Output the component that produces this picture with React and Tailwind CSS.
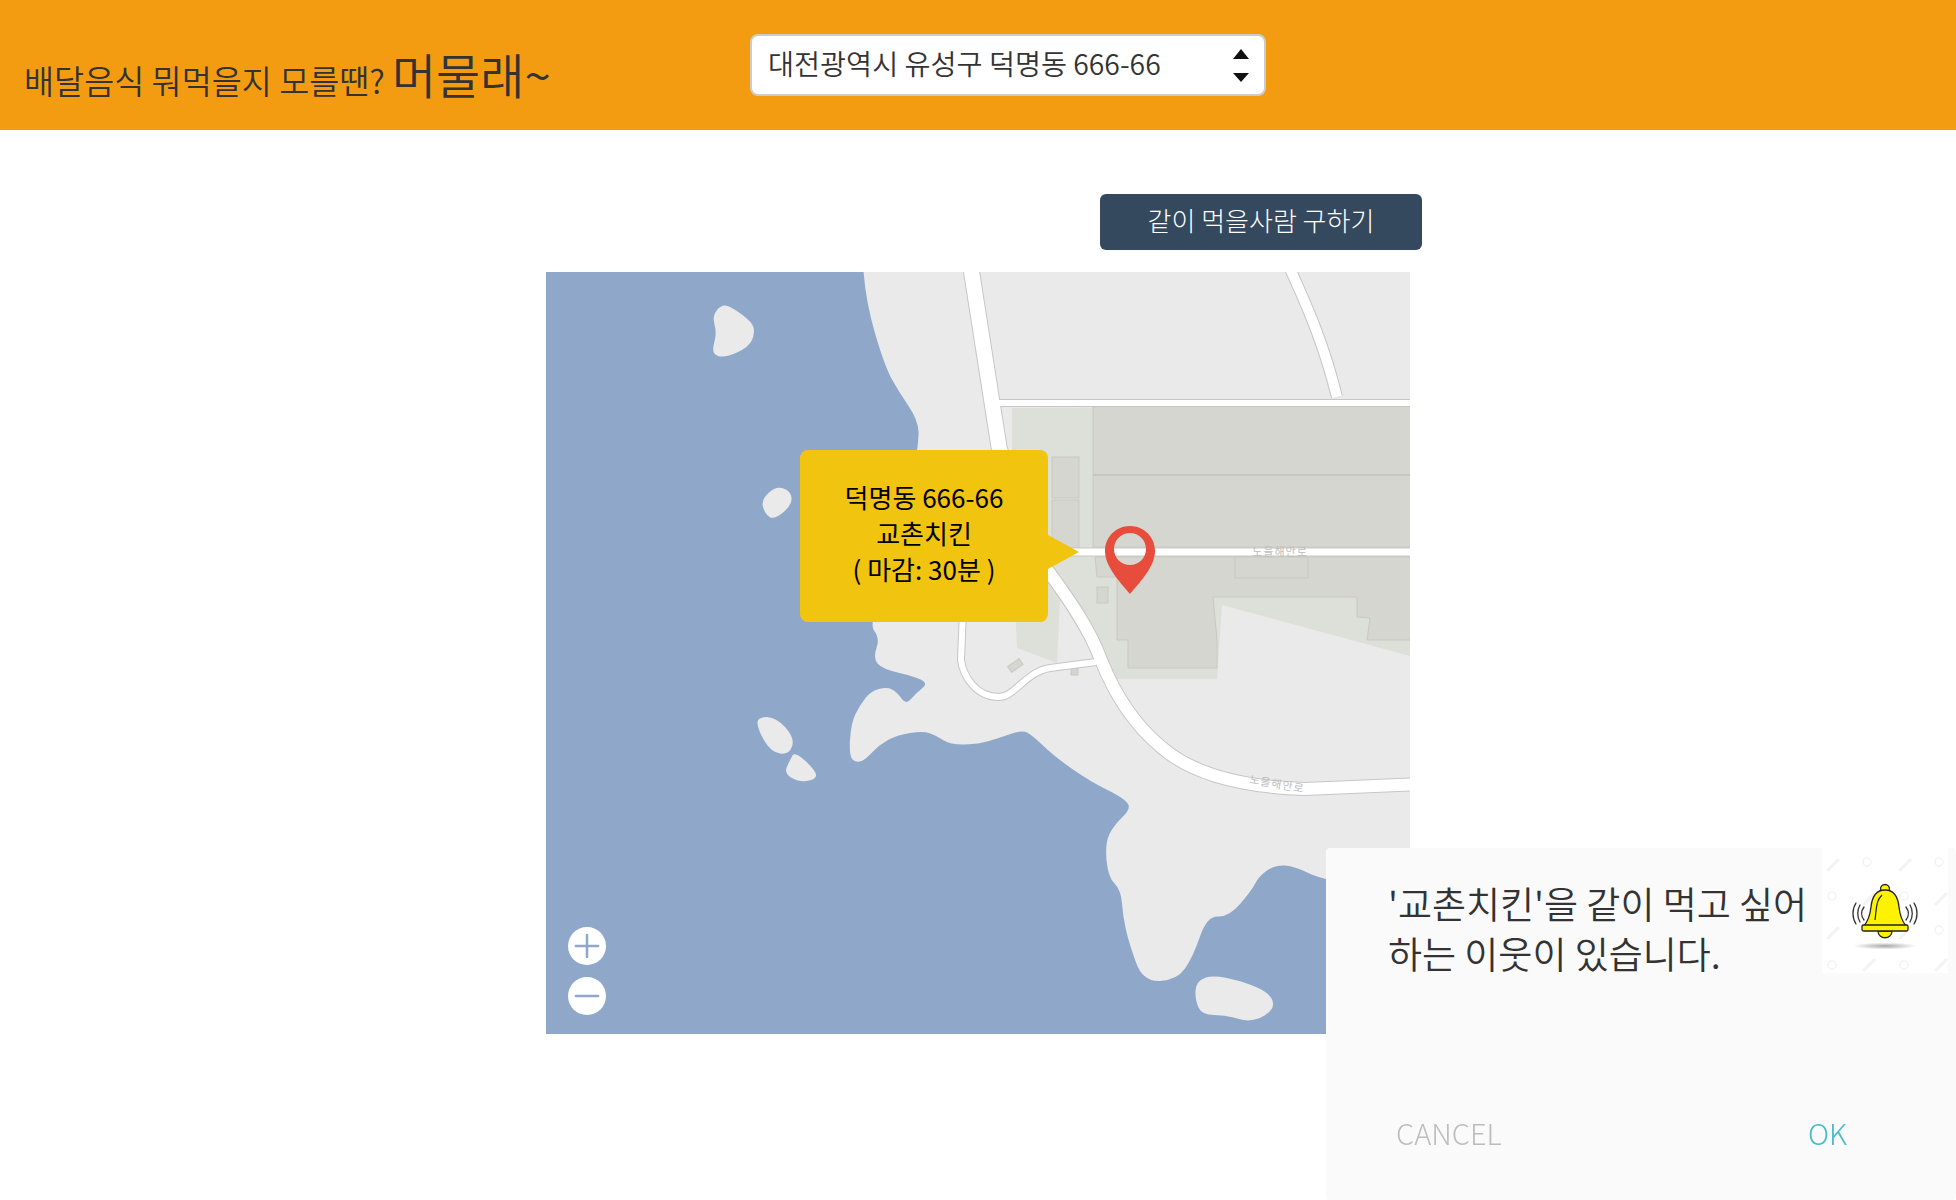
import React from 'react';
import { Plus, Minus } from 'lucide-react';

const FONT = "font-['Noto_Sans_CJK_KR','Noto_Sans',sans-serif]";

// Outlines traced off the map, in page coordinates (viewBox matches them)
const COAST = [
  [861, 240], [866, 303], [885, 367], [899, 392], [918, 420], [919, 443], [905, 520], [868, 623], [880, 638],
  [873, 658], [882, 669], [917, 677], [928, 684], [916, 693], [906, 705], [897, 692], [887, 687], [871, 691],
  [860, 705], [851, 723], [849, 757], [857, 763], [866, 759], [879, 745], [897, 735], [923, 731], [935, 735],
  [951, 745], [979, 744], [999, 738], [1022, 730], [1032, 735], [1055, 757], [1091, 782], [1122, 797], [1132, 808],
  [1114, 825], [1105, 843], [1108, 877], [1121, 890], [1123, 917], [1129, 943], [1143, 982], [1177, 980], [1193, 957],
  [1207, 916], [1229, 917], [1252, 890], [1259, 876], [1275, 865], [1295, 866], [1326, 882], [1700, 960], [1700, 100], [861, 100],
];
const ISLANDS = [
  [[712, 316], [722, 304], [733, 308], [752, 322], [755, 333], [749, 347], [725, 358], [711, 354], [717, 333]],
  [[761, 500], [776, 486], [791, 491], [792, 505], [774, 520], [765, 514]],
  [[757, 717], [776, 717], [795, 738], [789, 755], [771, 752], [758, 730]],
  [[795, 751], [817, 772], [815, 780], [798, 782], [784, 773], [790, 760]],
  [[1196, 981], [1216, 974], [1266, 989], [1277, 1008], [1252, 1023], [1226, 1015], [1202, 1015], [1195, 1000]],
];
const ROADS = [
  { w: 15, d: 'M970 262 L999 447 L1020 520' },
  { w: 12, d: 'M1040 560 C1070 600 1090 630 1101 660 C1115 695 1135 725 1160 746 C1190 773 1240 787 1305 789 L1420 784' },
  { w: 6, d: 'M990 403 L1420 403' },
  { w: 10, d: 'M1287 262 C1309 310 1324 345 1337 397' },
  { w: 7, d: 'M1040 552 L1420 552' },
  { w: 6, d: 'M963 610 L961 660 C963 675 975 697 999 697 C1015 697 1025 672 1050 668 L1096 662' },
];

const smooth = (pts) => {
  const mid = (a, b) => [(a[0] + b[0]) / 2, (a[1] + b[1]) / 2];
  const start = mid(pts[pts.length - 1], pts[0]);
  let d = `M${start[0]} ${start[1]}`;
  pts.forEach((p, i) => {
    const m = mid(p, pts[(i + 1) % pts.length]);
    d += ` Q${p[0]} ${p[1]} ${m[0]} ${m[1]}`;
  });
  return d + 'Z';
};

const MapDrawing = () => (
  <svg viewBox="546 272 864 762" className="block w-full h-full">
    <rect x="546" y="272" width="864" height="762" fill="#8fa8c9" />
    <path d={smooth(COAST)} fill="#eaeaea" />
    {ISLANDS.map((pts, i) => <path key={i} d={smooth(pts)} fill="#eaeaea" />)}

    {/* land use */}
    <path d="M1012 408 L1410 406 L1410 656 L1222 605 L1217 679 L1110 679 L1060 600 L1057 663 L1017 648 L1015 600 L1012 560 Z" fill="#dde0d8" />
    <path d="M1062 610 L1100 679 L1057 672 Z" fill="#eaeaea" />
    <g fill="#d4d6cf" stroke="#c8cac2">
      <rect x="1093" y="405" width="330" height="142" />
      <rect x="1052" y="457" width="27" height="41" />
      <rect x="1052" y="500" width="27" height="48" />
      <path d="M1095 557 L1097 577 L1117 577 L1117 640 L1128 640 L1128 668 L1217 668 L1217 640 L1213 597 L1357 597 L1357 617 L1370 618 L1367 640 L1420 640 L1420 557 Z" />
      <rect x="1235" y="557" width="73" height="21" />
      <rect x="1097" y="587" width="11" height="16" />
      <rect x="1008" y="662" width="14" height="7" transform="rotate(-35 1015 665)" />
      <rect x="1071" y="668" width="7" height="7" />
    </g>
    <path d="M1093 475 H1410" stroke="#c4c6bf" strokeWidth="2" />

    {/* roads: grey casing first, white fill on top */}
    <g fill="none">
      {ROADS.map((r, i) => <path key={i} d={r.d} stroke="#c6c6c6" strokeWidth={r.w + 2} />)}
      {ROADS.map((r, i) => <path key={i} d={r.d} stroke="#ffffff" strokeWidth={r.w} />)}
    </g>
    <text x="1280" y="556" textAnchor="middle" fontSize="11" fill="#bdbdbd" letterSpacing="1" fontFamily="'Noto Sans CJK KR'">노을해안로</text>
    <text x="1277" y="788" textAnchor="middle" fontSize="11" fill="#bdbdbd" letterSpacing="1" fontFamily="'Noto Sans CJK KR'" transform="rotate(10 1277 784)">노을해안로</text>
  </svg>
);

const Pin = () => (
  <svg viewBox="0 0 50 68" className="w-[50px] h-[68px]">
    <path
      fillRule="evenodd"
      fill="#e74c3c"
      d="M25 0C11 0 0 11 0 25C0 40 14 55 25 68C36 55 50 40 50 25C50 11 39 0 25 0ZM25 7C34 7 41 14 41 23C41 32 34 39 25 39C16 39 9 32 9 23C9 14 16 7 25 7Z"
    />
  </svg>
);

const BellImage = () => (
  <svg viewBox="0 0 126 125" className="w-[126px] h-[125px] shrink-0 mr-[8px]">
    <defs>
      <radialGradient id="bellShadow">
        <stop offset="0%" stopColor="#a8a8a8" />
        <stop offset="100%" stopColor="#ffffff" />
      </radialGradient>
    </defs>
    <rect width="126" height="125" fill="#ffffff" />
    {/* stock-photo watermark */}
    <g stroke="#f3f3f3" strokeWidth="3" strokeLinecap="round" fill="none">
      <path d="M6 22 L16 12M78 22 L88 12M6 90 L16 80M78 90 L88 80M42 56 L52 46M114 56 L124 46M42 122 L52 112M114 122 L124 112" />
      <circle cx="45" cy="14" r="4" strokeWidth="1.5" />
      <circle cx="117" cy="14" r="4" strokeWidth="1.5" />
      <circle cx="10" cy="48" r="4" strokeWidth="1.5" />
      <circle cx="82" cy="48" r="4" strokeWidth="1.5" />
      <circle cx="117" cy="82" r="4" strokeWidth="1.5" />
      <circle cx="10" cy="117" r="4" strokeWidth="1.5" />
      <circle cx="82" cy="117" r="4" strokeWidth="1.5" />
    </g>
    <ellipse cx="63" cy="98" rx="32" ry="3.5" fill="url(#bellShadow)" />
    <g stroke="#222222" strokeWidth="1.3" fill="#fff200" strokeLinejoin="round">
      <path d="M56 83 C56 92 70 92 70 83 Z" />
      <circle cx="63" cy="41" r="4.5" />
      <path d="M63 42 C54 42 50 49 49 59 C48 68 46 73 42 78 H84 C80 73 78 68 77 59 C76 49 72 42 63 42 Z" />
      <rect x="40" y="77" width="46" height="6" rx="1.5" />
    </g>
    <path d="M53 72 C54 65 54 58 56 53 C57 50 58 49 60 47" fill="none" stroke="#222222" strokeWidth="1.2" />
    <g stroke="#333333" strokeWidth="1.3" fill="none" strokeLinecap="round">
      <path d="M42 59 C39 63 39 68 42 72M38 57 C35 62 35 69 38 74M34 55 C30 61 30 70 34 76" />
      <path d="M84 59 C87 63 87 68 84 72M88 57 C91 62 91 69 88 74M92 55 C96 61 96 70 92 76" />
    </g>
  </svg>
);

const ConfirmDialog = () => (
  <div className="fixed left-[1326px] right-0 top-[848px] bottom-0 bg-[#fafafa] rounded-[4px] flex flex-col">
    <div className="flex items-start justify-between">
      <p className="pl-[62px] pt-[30px] text-[37px] leading-[50px] font-[350] text-[#333333]">
        '교촌치킨'을 같이 먹고 싶어<br />하는 이웃이 있습니다.
      </p>
      <BellImage />
    </div>
    <div className="mt-auto flex justify-between pl-[70px] pr-[109px] pb-[48px] text-[29px] leading-[40px] font-light">
      <button className="text-[#bdbdbd]">CANCEL</button>
      <button className="text-[#44bcc9]">OK</button>
    </div>
  </div>
);

export default function App() {
  return (
    <div className={`min-h-screen bg-white text-[#333333] ${FONT}`}>
      <header className="h-[130px] bg-[#f39c12] flex">
        <div className="w-[750px] pl-[24px] pt-[43px] font-[350]">
          <span className="text-[32.7px]">배달음식 뭐먹을지 모를땐? </span>
          <span className="text-[48px] leading-[60px]">머물래~</span>
        </div>
        <div className="relative mt-[34px] w-[516px] h-[62px]">
          <select className="w-full h-full appearance-none bg-white border-2 border-[#cccccc] rounded-[8px] pl-[16px] pb-[4px] text-[28.3px] font-[350] text-[#333333]">
            <option>대전광역시 유성구 덕명동 666-66</option>
          </select>
          <svg viewBox="0 0 16 33" className="absolute right-[17px] top-[15px] w-[16px] h-[33px]">
            <path d="M0 10 L8 0 L16 10 Z M0 24 L16 24 L8 33 Z" fill="#111111" />
          </svg>
        </div>
      </header>

      <main className="w-[888px] mx-auto pt-[64px] flex flex-col items-end">
        <button className="w-[322px] h-[56px] pb-[6px] bg-[#34495e] text-white text-[26px] font-light rounded-[6px]">
          같이 먹을사람 구하기
        </button>
        <div className="relative w-[864px] h-[762px] mt-[22px] mr-[12px]">
          <MapDrawing />

          <div className="absolute left-[254px] top-[178px] w-[248px] h-[172px] pb-[7px] bg-[#f1c40f] rounded-[8px] flex items-center justify-center text-center text-black text-[26px] leading-[36px]">
            <div>덕명동 666-66<br />교촌치킨<br />( 마감: 30분 )</div>
            <span className="absolute left-full top-[85px] border-y-[17px] border-y-transparent border-l-[31px] border-l-[#f1c40f]" />
          </div>

          <div className="absolute left-[559px] top-[254px]">
            <Pin />
          </div>

          <div className="absolute left-[22px] top-[655px] flex flex-col gap-[12px]">
            <span className="w-[38px] h-[38px] rounded-full bg-white flex items-center justify-center text-[#8fa8c9]">
              <Plus size={38} strokeWidth={1.6} className="shrink-0" />
            </span>
            <span className="w-[38px] h-[38px] rounded-full bg-white flex items-center justify-center text-[#8fa8c9]">
              <Minus size={38} strokeWidth={1.6} className="shrink-0" />
            </span>
          </div>
        </div>
      </main>

      <ConfirmDialog />
    </div>
  );
}
